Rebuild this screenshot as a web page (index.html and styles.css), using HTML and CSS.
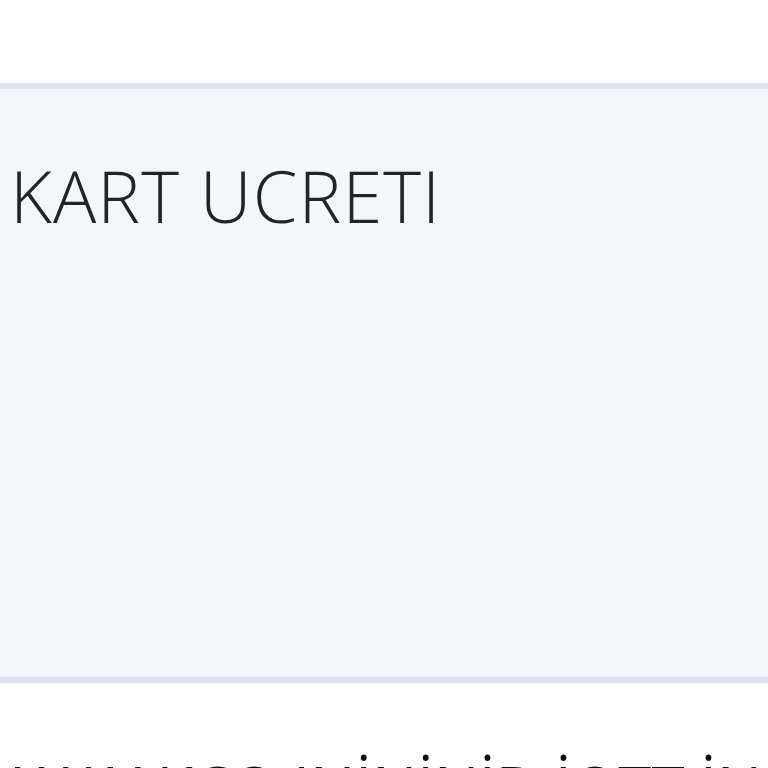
FILE: index.html
```html
<!DOCTYPE html>
<html lang="tr">
<head>
<meta charset="utf-8">
<title>Kart Ucreti</title>
<link rel="stylesheet" href="styles.css">
</head>
<body>
<div class="page">
  <section class="panel">
    <h2 class="panel-title">KART UCRETI</h2>
  </section>
  <p class="note">WAY KÇO INİNİNİD İOTT İN</p>
</div>
</body>
</html>
```
FILE: styles.css
```css
html, body {
  margin: 0;
  padding: 0;
  background: #ffffff;
  overflow: hidden;
}
.page {
  width: 768px;
  height: 768px;
  overflow: hidden;
  font-family: "Open Sans", "Noto Sans", sans-serif;
  color: #222428;
  padding-top: 83px;
  box-sizing: border-box;
}
.panel {
  background: #f5f6fa;
  border-top: 6px solid #dde1ea;
  border-bottom: 6px solid #dde1ea;
  height: 588px;
  padding: 0 0 0 10px;
  box-sizing: content-box;
}
.panel-title {
  margin: 0;
  padding-top: 63px;
  font-size: 72px;
  font-weight: 300;
  line-height: 1.2;
  letter-spacing: 1.1px;
}
.note {
  margin: 0;
  padding: 68px 0 0 14px;
  font-size: 60px;
  font-weight: 400;
  line-height: 1.2;
  white-space: nowrap;
  color: #111;
}
```
